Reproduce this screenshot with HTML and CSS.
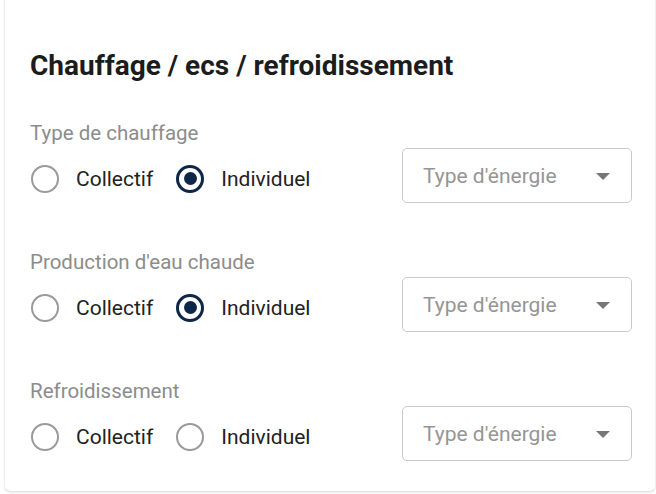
FILE: index.html
```html
<!DOCTYPE html>
<html lang="fr">
<head>
<meta charset="utf-8">
<title>Chauffage / ecs / refroidissement</title>
<link rel="stylesheet" href="styles.css">
</head>
<body>
<div class="card">
  <h2 class="title">Chauffage / ecs / refroidissement</h2>

  <div class="section">
    <div class="label">Type de chauffage</div>
    <div class="row">
      <div class="radios">
        <label class="radio"><span class="dot"></span><span class="rtext">Collectif</span></label>
        <label class="radio checked"><span class="dot"></span><span class="rtext">Individuel</span></label>
      </div>
      <div class="select"><span class="placeholder">Type d'énergie</span><span class="arrow"></span></div>
    </div>
  </div>

  <div class="section">
    <div class="label">Production d'eau chaude</div>
    <div class="row">
      <div class="radios">
        <label class="radio"><span class="dot"></span><span class="rtext">Collectif</span></label>
        <label class="radio checked"><span class="dot"></span><span class="rtext">Individuel</span></label>
      </div>
      <div class="select"><span class="placeholder">Type d'énergie</span><span class="arrow"></span></div>
    </div>
  </div>

  <div class="section">
    <div class="label">Refroidissement</div>
    <div class="row">
      <div class="radios">
        <label class="radio"><span class="dot"></span><span class="rtext">Collectif</span></label>
        <label class="radio"><span class="dot"></span><span class="rtext">Individuel</span></label>
      </div>
      <div class="select"><span class="placeholder">Type d'énergie</span><span class="arrow"></span></div>
    </div>
  </div>
</div>
</body>
</html>
```

FILE: styles.css
```css
html, body {
  margin: 0;
  background: #ffffff;
}
body {
  padding: 0 1px 3px 5px;
  font-family: Roboto, "Liberation Sans", sans-serif;
  overflow: hidden;
}
.card {
  margin-top: -20px;
  padding: 69px 23px 30px 25px;
  background: #fff;
  border-radius: 5px;
  box-shadow: 0 1px 3px rgba(0,0,0,0.16), 0 0 1px rgba(0,0,0,0.10);
}
.title {
  margin: 0;
  font-size: 28px;
  line-height: 33px;
  font-weight: 700;
  color: #1c1c1c;
}
.section {
  margin-top: 39px;
}
.section + .section {
  margin-top: 47px;
}
.label {
  font-size: 20.5px;
  line-height: 24px;
  color: #8c8c8c;
}
.row {
  margin-top: 3px;
  display: flex;
  align-items: center;
  justify-content: space-between;
}
.radios {
  display: flex;
  align-items: center;
  gap: 23px;
  margin-top: 6px;
  padding-left: 1px;
}
.radio {
  display: flex;
  align-items: center;
  gap: 17px;
}
.dot {
  box-sizing: border-box;
  width: 28px;
  height: 28px;
  border-radius: 50%;
  border: 2.5px solid #9a9a9a;
  display: flex;
  align-items: center;
  justify-content: center;
}
.radio.checked .dot {
  border: 3px solid #0e2748;
}
.radio.checked .dot::after {
  content: "";
  width: 13px;
  height: 13px;
  border-radius: 50%;
  background: #0e2748;
}
.rtext {
  font-size: 21px;
  color: #222;
}
.select {
  box-sizing: border-box;
  width: 230px;
  height: 55px;
  border: 1px solid #cacaca;
  border-radius: 5px;
  display: flex;
  align-items: center;
  justify-content: space-between;
  padding: 0 21px 0 20px;
}
.placeholder {
  font-size: 21px;
  color: #959595;
}
.arrow {
  width: 0;
  height: 0;
  border-left: 7px solid transparent;
  border-right: 7px solid transparent;
  border-top: 7px solid #777;
  margin-top: 1px;
}
```
